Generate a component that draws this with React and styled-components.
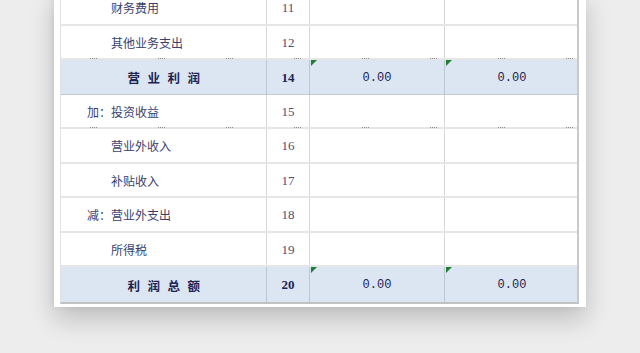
import React from 'react'
import styled, { createGlobalStyle, css } from 'styled-components'

const GlobalStyle = createGlobalStyle`
    html, body {
        margin: 0;
        padding: 0;
        background: #ededed;
        overflow: hidden;
    }
    body {
        width: 640px;
        height: 353px;
    }
`;

const Paper = styled.div`
    width: 532px;
    margin: -9px 0 0 54px;
    padding: 0 7px 3px 6px;
    box-sizing: border-box;
    background: #fff;
    box-shadow: 0 12px 24px rgba(0, 0, 0, 0.2), -2px 0 6px rgba(0, 0, 0, 0.06);
`;

const Table = styled.div`
    border-right: 2px solid #c9c9c9;
    border-left: 1px solid #e2e2e2;
    border-bottom: 2px solid #c2c2c2;
`;

const Row = styled.div`
    position: relative;
    display: grid;
    grid-template-columns: 206px 43px 135px 134px;
    height: 34.5px;
    box-sizing: border-box;
    background: ${p => (p.$total ? '#dce6f2' : '#fff')};
    border-bottom: ${p => (p.$total ? '1px solid #c3cad6' : '2px solid #e6e6e6')};
    &:last-child {
        border-bottom: none;
    }
    ${p => p.$marks && css`
        &::before {
            content: '';
            position: absolute;
            left: 0;
            right: 0;
            top: -2px;
            height: 1px;
            background-image: repeating-linear-gradient(
                to right,
                transparent 0 29px,
                #8a8a8a 29px 30px,
                transparent 30px 31px,
                #8a8a8a 31px 32px,
                transparent 32px 33px,
                #8a8a8a 33px 34px,
                transparent 34px 35px,
                #8a8a8a 35px 36px,
                transparent 36px 68px
            );
        }
    `}
`;

const Cell = styled.div`
    position: relative;
    display: flex;
    align-items: center;
    padding-top: 2px;
    box-sizing: border-box;
    border-right: 1px solid ${p => (p.$total ? '#bcc5d2' : '#d6d6d6')};
    &:last-child {
        border-right: none;
    }
    ${p => p.$flag && css`
        &::before {
            content: '';
            position: absolute;
            left: 1px;
            top: 0;
            border-top: 6px solid #1f7d34;
            border-right: 6px solid transparent;
        }
    `}
`;

const LabelCell = styled(Cell)`
    padding-left: 26px;
    font-family: "Liberation Serif", "Noto Sans CJK SC", serif;
    font-size: 12px;
    color: #3a3f6c;
    ${p => p.$total && css`
        justify-content: center;
        padding-left: 8px;
        font-size: 12.5px;
        font-weight: 700;
        letter-spacing: 7.5px;
        color: #1d2352;
    `}
`;

const Prefix = styled.span`
    display: inline-block;
    width: 24px;
`;

const NoCell = styled(Cell)`
    justify-content: center;
    font-family: "Liberation Serif", serif;
    font-size: 13px;
    color: ${p => (p.$total ? '#1d2352' : '#4a4f78')};
    font-weight: ${p => (p.$total ? 700 : 400)};
`;

const ValueCell = styled(Cell)`
    justify-content: center;
    font-family: "Liberation Mono", monospace;
    font-size: 12px;
    color: #1d2352;
`;

const rows = [
    { label: '财务费用', no: 11 },
    { label: '其他业务支出', no: 12 },
    { label: '营业利润', no: 14, total: true, marks: true },
    { label: '投资收益', prefix: '加：', no: 15 },
    { label: '营业外收入', no: 16, marks: true },
    { label: '补贴收入', no: 17 },
    { label: '营业外支出', prefix: '减：', no: 18 },
    { label: '所得税', no: 19 },
    { label: '利润总额', no: 20, total: true },
];

const App = () => {
    return (
        <>
            <GlobalStyle />
            <Paper>
                <Table>
                    {rows.map(r => (
                        <Row key={r.no} $total={r.total} $marks={r.marks}>
                            <LabelCell $total={r.total}>
                                {!r.total && <Prefix>{r.prefix}</Prefix>}
                                {r.label}
                            </LabelCell>
                            <NoCell $total={r.total}>{r.no}</NoCell>
                            <ValueCell $total={r.total} $flag={r.total}>{r.total ? '0.00' : ''}</ValueCell>
                            <ValueCell $total={r.total} $flag={r.total}>{r.total ? '0.00' : ''}</ValueCell>
                        </Row>
                    ))}
                </Table>
            </Paper>
        </>
    )
}

export default App
